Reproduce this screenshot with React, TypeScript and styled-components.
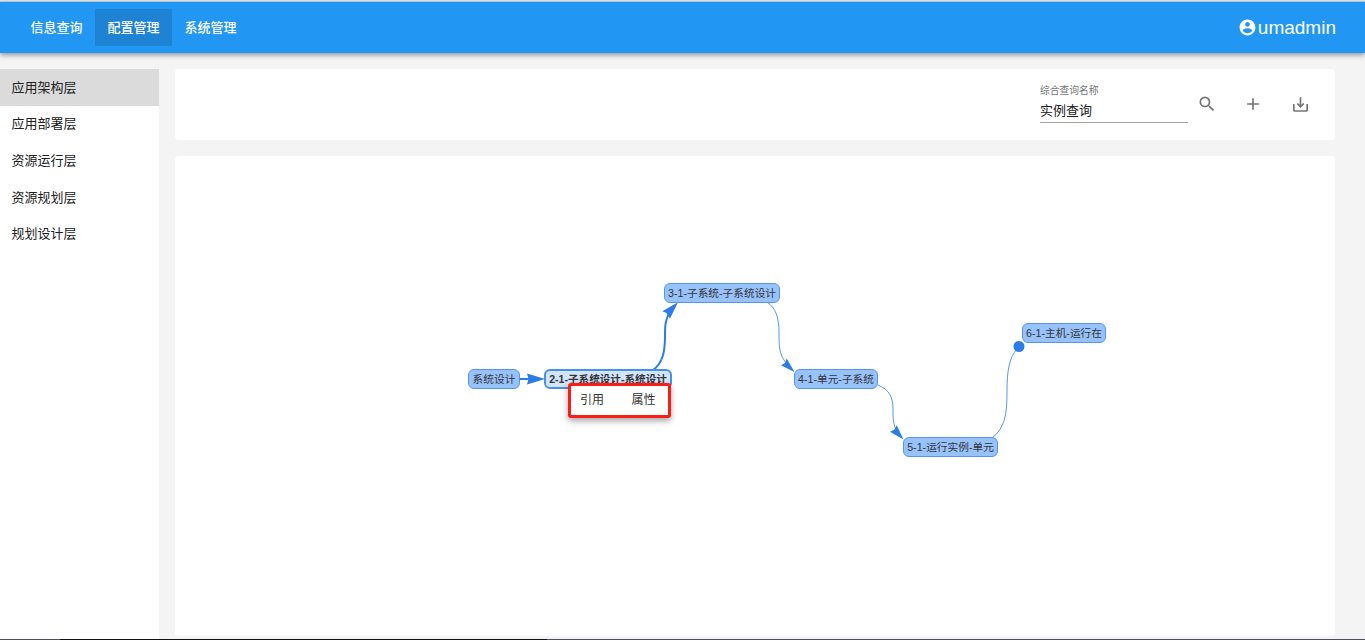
import React from "react";
import styled, { createGlobalStyle } from "styled-components";

const Global = createGlobalStyle`
  * { box-sizing: border-box; }
  html, body { margin: 0; padding: 0; overflow: hidden; }
  body { background: #f4f4f4; font-family: "Liberation Sans", "Noto Sans CJK SC", sans-serif; color: #212121; }
`;

const Page = styled.div`
  display: flex;
  flex-direction: column;
  height: 640px;
  border-top: 1px solid #eceeef;
`;

const Header = styled.header`
  position: relative;
  display: flex;
  align-items: center;
  height: 52px;
  flex: none;
  padding: 0 29px 0 18px;
  border-top: 1px solid #b4c2cd;
  background: #2196f3;
  color: #fff;
  box-shadow: 0 2px 5px rgba(0, 0, 0, 0.4);
`;

const NavItem = styled.a<{ $active?: boolean }>`
  display: flex;
  align-items: center;
  justify-content: center;
  height: 37px;
  width: 77px;
  padding-bottom: 3px;
  font-size: 13px;
  font-weight: 500;
  white-space: nowrap;
  background: ${(p) => (p.$active ? "#1e83d3" : "transparent")};
`;

const User = styled.div`
  display: flex;
  align-items: center;
  margin-left: auto;
  gap: 1px;
  font-size: 19px;
  line-height: 22px;
`;

const Body = styled.div`
  display: flex;
  flex: 1;
  min-height: 0;
  padding-top: 16px;
`;

const Sidebar = styled.nav`
  width: 159px;
  flex: none;
  background: #fff;
`;

const SideItem = styled.a<{ $active?: boolean }>`
  display: flex;
  align-items: center;
  height: 36.7px;
  padding: 0 0 2.4px 11.5px;
  font-size: 13px;
  background: ${(p) => (p.$active ? "#dbdbdb" : "transparent")};
`;

const Main = styled.main`
  display: flex;
  flex-direction: column;
  gap: 16px;
  flex: 1;
  padding: 0 30px 3px 16px;
`;

const Toolbar = styled.section`
  display: flex;
  justify-content: flex-end;
  height: 71px;
  flex: none;
  padding: 15px 26px 0 0;
  border-radius: 4px;
  background: #fff;
`;

const Field = styled.label`
  display: flex;
  flex-direction: column;
  width: 148px;
  height: 39px;
  border-bottom: 1px solid #a3a3a3;
`;

const FieldLabel = styled.span`
  font-size: 9.75px;
  line-height: 13px;
  color: #757575;
`;

const FieldValue = styled.span`
  font-size: 13px;
  line-height: 27px;
`;

const Actions = styled.div`
  display: flex;
  gap: 26px;
  margin: 10px 0 0 9px;
  color: #757575;
  svg { display: block; flex: none; }
`;

const Canvas = styled.section`
  position: relative;
  flex: 1;
  border-radius: 4px;
  background: #fff;
`;

const Edges = styled.svg`
  position: absolute;
  inset: 0;
`;

const Node = styled.div<{ $x: number; $y: number; $w: number; $selected?: boolean }>`
  position: absolute;
  left: ${(p) => p.$x}px;
  top: ${(p) => p.$y}px;
  width: ${(p) => p.$w}px;
  height: 20px;
  display: flex;
  align-items: center;
  justify-content: center;
  border: ${(p) => (p.$selected ? "2px solid #4590ee" : "1px solid #5595f0")};
  border-radius: 6px;
  background: ${(p) => (p.$selected ? "#d2e5ff" : "#97c2fc")};
  color: #343434;
  font-size: ${(p) => (p.$selected ? 10.6 : 10.7)}px;
  font-weight: ${(p) => (p.$selected ? 700 : 400)};
  line-height: 16px;
  white-space: nowrap;
`;

const Menu = styled.div`
  position: absolute;
  left: 393px;
  top: 227px;
  display: flex;
  gap: 27.5px;
  width: 103px;
  height: 35px;
  padding-left: 9px;
  border: 3px solid #fc1c14;
  border-radius: 3px;
  background: #fff;
  box-shadow: 0 3px 6px rgba(0, 0, 0, 0.35);
`;

const MenuItem = styled.button`
  padding: 0 0 4px;
  border: 0;
  background: none;
  color: #333;
  font: 12px "Liberation Sans", "Noto Sans CJK SC", sans-serif;
  white-space: nowrap;
`;

const Strip = styled.div`
  height: 1px;
  flex: none;
  background: linear-gradient(90deg, #4a505c 60px, #101214 60px 547px, #4a505c 547px);
`;

const nodes = [
  { text: "系统设计", x: 293, y: 213, w: 52 },
  { text: "2-1-子系统设计-系统设计", x: 369, y: 213, w: 128, selected: true },
  { text: "3-1-子系统-子系统设计", x: 489, y: 127, w: 116 },
  { text: "4-1-单元-子系统", x: 619, y: 213, w: 84 },
  { text: "5-1-运行实例-单元", x: 728, y: 281.4, w: 95 },
  { text: "6-1-主机-运行在", x: 847, y: 167, w: 84 },
];

export default function App() {
  return (
    <Page>
      <Global />
      <Header>
        <NavItem>信息查询</NavItem>
        <NavItem $active>配置管理</NavItem>
        <NavItem>系统管理</NavItem>
        <User>
          <svg width="19" height="19" viewBox="0 0 24 24" fill="currentColor">
            <path d="M12 2C6.48 2 2 6.48 2 12s4.48 10 10 10 10-4.48 10-10S17.52 2 12 2zm0 3c1.66 0 3 1.34 3 3s-1.34 3-3 3-3-1.34-3-3 1.34-3 3-3zm0 14.2c-2.5 0-4.71-1.28-6-3.22.03-1.99 4-3.08 6-3.08 1.99 0 5.97 1.09 6 3.08-1.29 1.94-3.5 3.22-6 3.22z" />
          </svg>
          <span>umadmin</span>
        </User>
      </Header>
      <Body>
        <Sidebar>
          <SideItem $active>应用架构层</SideItem>
          <SideItem>应用部署层</SideItem>
          <SideItem>资源运行层</SideItem>
          <SideItem>资源规划层</SideItem>
          <SideItem>规划设计层</SideItem>
        </Sidebar>
        <Main>
          <Toolbar>
            <Field>
              <FieldLabel>综合查询名称</FieldLabel>
              <FieldValue>实例查询</FieldValue>
            </Field>
            <Actions>
              <svg width="20" height="20" viewBox="0 0 24 24" fill="currentColor">
                <path d="M15.5 14h-.79l-.28-.27A6.471 6.471 0 0 0 16 9.5 6.5 6.5 0 1 0 9.5 16c1.61 0 3.09-.59 4.23-1.57l.27.28v.79l5 4.99L20.49 19l-4.99-5zm-6 0C7.01 14 5 11.99 5 9.5S7.01 5 9.5 5 14 7.01 14 9.5 11.99 14 9.5 14z" />
              </svg>
              <svg width="20" height="20" viewBox="0 0 24 24" fill="currentColor">
                <path d="M19 13h-6v6h-2v-6H5v-2h6V5h2v6h6v2z" />
              </svg>
              <svg width="20" height="20" viewBox="0 0 20 20" fill="none" stroke="currentColor" strokeWidth="1.7">
                <path d="M4.8 10V16a1 1 0 0 0 1 1H17.200a1 1 0 0 0 1-1V10" />
                <path d="M11.500 3.300V12.500M8.200 9.500L11.500 12.800L14.800 9.500" />
              </svg>
            </Actions>
          </Toolbar>
          <Canvas>
            <Edges width="1160" height="480" fill="none" stroke="#2b7ce9">
              <path d="M345 223H361" strokeWidth="2" />
              <path d="M478 214C488 207 490 195 490 180C490 170 490 164 495 156" strokeWidth="2" />
              <path d="M592 146C601 152 604 162 604 176C604 190 604 198 611 207" strokeWidth="0.8" />
              <path d="M703 229C715 234 718 242 718 253C718 262 718 268 722 276" strokeWidth="0.8" />
              <path d="M817 282C830 272 832 258 832 236C832 215 834 202 842 193" strokeWidth="0.8" />
              <g fill="#2b7ce9" stroke="none">
                <path d="M370 223L352 217.5L353.5 223L352 228.5Z" />
                <path d="M503 146.3L487.3 155.3L491.5 157L495 162.5Z" />
                <path d="M619.5 216L606 209.3L610 207L611.7 202.5Z" />
                <path d="M728.5 283.5L715 275.8L719.5 273.5L721.7 269.3Z" />
                <circle cx="844" cy="190.5" r="5.5" />
              </g>
            </Edges>
            {nodes.map((n) => (
              <Node key={n.text} $x={n.x} $y={n.y} $w={n.w} $selected={n.selected}>
                {n.text}
              </Node>
            ))}
            <Menu>
              <MenuItem>引用</MenuItem>
              <MenuItem>属性</MenuItem>
            </Menu>
          </Canvas>
        </Main>
      </Body>
      <Strip />
    </Page>
  );
}
